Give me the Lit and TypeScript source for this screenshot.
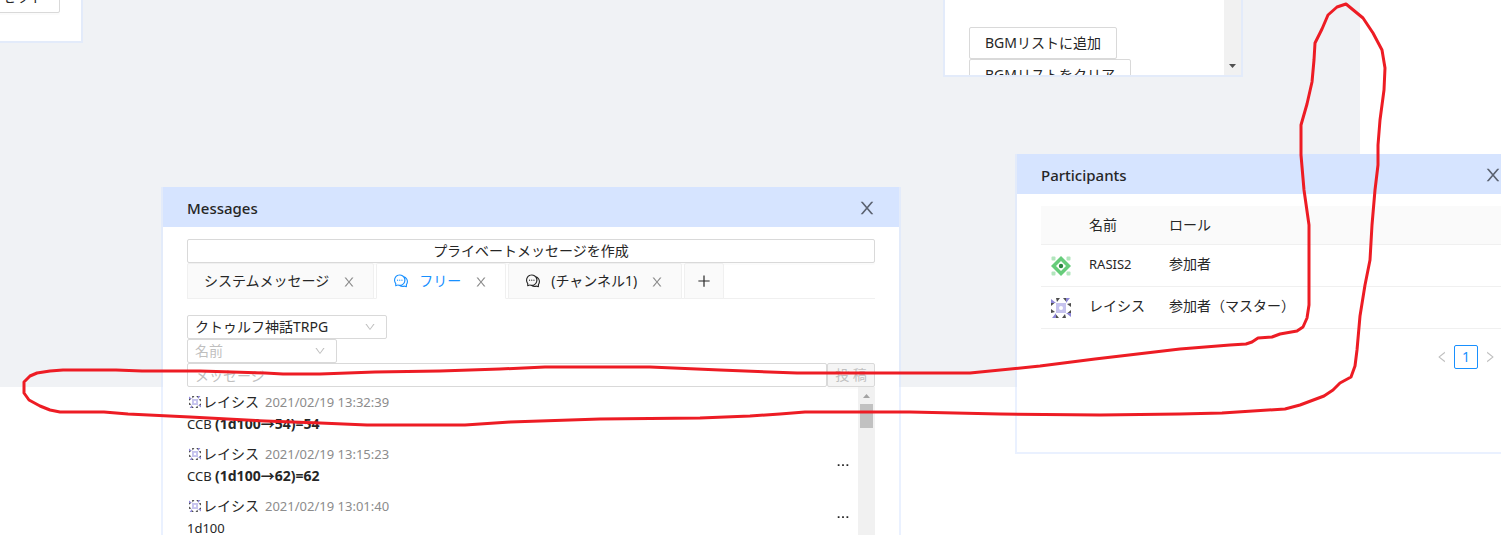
import { LitElement, html, css, svg } from "lit";
import { customElement, property, state } from "lit/decorators.js";
import { classMap } from "lit/directives/class-map.js";

const ICONS: Record<string, string> = {
  close:
    "M563.8 512l262.5-312.9c4.4-5.2.7-13.1-6.1-13.1h-79.8c-4.7 0-9.2 2.1-12.3 5.7L511.6 449.8 295.1 191.7c-3-3.6-7.5-5.7-12.3-5.7H203c-6.8 0-10.5 7.9-6.1 13.1L459.4 512 196.9 824.9A7.95 7.95 0 00203 838h79.8c4.7 0 9.2-2.1 12.3-5.7l216.5-258.1 216.5 258.1c3 3.6 7.5 5.7 12.3 5.7h79.8c6.8 0 10.5-7.9 6.1-13.1L563.8 512z",
  down: "M884 256h-75c-5.1 0-9.9 2.5-12.9 6.6L512 654.2 227.9 262.6c-3-4.1-7.8-6.6-12.9-6.6h-75c-6.5 0-10.3 7.4-6.5 12.7l352.6 486.1c12.8 17.6 39 17.6 51.7 0l352.6-486.1c3.9-5.3.1-12.7-6.4-12.7z",
  left: "M724 218.3V141c0-6.7-7.7-10.4-12.9-6.3L260.3 486.8a31.86 31.86 0 000 50.3l450.8 352.1c5.3 4.1 12.9.4 12.9-6.3v-77.3c0-4.9-2.3-9.6-6.1-12.6l-360-281 360-281.1c3.8-3 6.1-7.7 6.1-12.6z",
  right:
    "M765.7 486.8L314.9 134.7A7.97 7.97 0 00302 141v77.3c0 4.9 2.3 9.6 6.1 12.6l360 281.1-360 281.1c-3.9 3-6.1 7.7-6.1 12.6V883c0 6.7 7.7 10.4 12.9 6.3l450.8-352.1a31.96 31.96 0 000-50.4z",
  plus: "M474 152h76v720h-76zM152 474h720v76H152z",
  dots: "M176 456h112v112H176zM456 456h112v112H456zM736 456h112v112H736z",
  comment:
    "M573 421c-23.1 0-41 17.9-41 40s17.9 40 41 40c21.1 0 39-17.9 39-40s-17.9-40-39-40zm-280 0c-23.1 0-41 17.9-41 40s17.9 40 41 40c21.1 0 39-17.9 39-40s-17.9-40-39-40zM894 345a343.92 343.92 0 00-189-130v.1c-17.1-19-36.4-36.5-58-52.1-163.7-119-393.5-82.7-513 81-96.3 133-92.2 311.9 6 439l.8 132.6c0 3.2.5 6.4 1.5 9.4a31.95 31.95 0 0040.1 20.9L309 806c33.5 11.9 68.1 18.7 102.5 20.6l-.5.4c89.1 64.9 205.9 84.4 313 49l127.1 41.4c3.2 1 6.5 1.6 9.9 1.6 17.7 0 32-14.3 32-32V753c88.1-119.6 90.4-284.9 1-408zM323 735l-12-5-99 31-1-104-8-9c-84.6-103.2-90.2-251.9-11-361 96.4-132.2 281.2-161.4 413-66 132.2 96.1 161.5 280.6 66 412-80.1 109.9-223.5 150.5-348 102zm505-17l-8 10 1 104-98-33-12 5c-56 20.8-115.7 22.5-171 7l-.2-.1A367.31 367.31 0 00729 676c76.4-105.3 88.8-237.6 44.4-350.4l.6.4c23 16.5 44.1 37.1 62 62 72.6 99.6 68.5 235.2-8 330zM433 421c-23.1 0-41 17.9-41 40s17.9 40 41 40c21.1 0 39-17.9 39-40s-17.9-40-39-40z",
};

const icon = (name: string, size = 16) => html`<svg
  width=${size}
  height=${size}
  viewBox="0 0 1024 1024"
  fill="currentColor"
  aria-hidden="true"
>
  <path d=${ICONS[name]}></path>
</svg>`;

const quarterTurns = [0, 90, 180, 270];

const avatar = (kind: "green" | "violet", size: number) => html`<svg
  width=${size}
  height=${size}
  viewBox="0 0 20 20"
  aria-hidden="true"
>
  ${kind === "green"
    ? svg`${quarterTurns.map(
        (a) => svg`<g transform="rotate(${a} 10 10)">
          <rect x="0.5" y="0.5" width="4" height="4" rx="1" fill="#b2e6bd"></rect>
          <path d="M10 0L15 5H5z" fill="#66cc7a"></path>
        </g>`
      )}<path d="M5 5h10v10H5z" fill="#66cc7a"></path>
        <path d="M10 5L15 10L10 15L5 10z" fill="#fff"></path>
        <circle cx="10" cy="10" r="2.2" fill="#2a8540"></circle>`
    : svg`${quarterTurns.map(
        (a) => svg`<g transform="rotate(${a} 10 10)">
          <path d="M0 5V1L5 5z" fill="#8d86d6"></path>
          <path d="M5 0h4L6 4z" fill="#4d4d4d"></path>
          <path d="M12 0h3v3.500z" fill="#4d4d4d"></path>
        </g>`
      )}<path d="M5 5h10v10H5z" fill="#c6c3ee"></path><circle cx="10" cy="10" r="2" fill="#fff"></circle>`}
</svg>`;

const base = css`
  * {
    box-sizing: border-box;
  }
  button,
  input,
  select {
    margin: 0;
    padding: 0;
    border: 0;
    background: none;
    color: inherit;
    font: inherit;
    border-radius: 0;
  }
  svg {
    display: block;
    flex: none;
  }
  .btn {
    height: 32px;
    padding: 0 15px;
    border: 1px solid #d9d9d9;
    border-radius: 2px;
    background: #fff;
    box-shadow: 0 2px 0 rgba(0, 0, 0, 0.016);
    white-space: nowrap;
    line-height: 22px;
  }
  .btn.small {
    height: 24px;
    padding: 0 7px;
  }
`;

@customElement("float-window")
class FloatWindow extends LitElement {
  @property() heading = "";

  static styles = [
    base,
    css`
      :host {
        display: flex;
        flex-direction: column;
        box-sizing: border-box;
        overflow: hidden;
        border: 2px solid rgba(214, 228, 255, 0.5);
        border-top: 0;
        background: #fff;
        background-clip: padding-box;
      }
      .head {
        display: flex;
        flex: none;
        align-items: center;
        justify-content: space-between;
        height: 40px;
        padding: 2px 22px 0 24px;
        background: #d6e4ff;
      }
      h2 {
        margin: 0;
        font-size: 15px;
        line-height: 22px;
        font-weight: 500;
      }
      .close {
        color: #5b6270;
      }
      .body {
        flex: 1;
        min-height: 0;
      }
    `,
  ];

  render() {
    return html`
      ${this.heading
        ? html`<header class="head">
            <h2>${this.heading}</h2>
            <button class="close" aria-label="閉じる">${icon("close", 20)}</button>
          </header>`
        : null}
      <div class="body"><slot></slot></div>
    `;
  }
}

@customElement("message-panel")
class MessagePanel extends LitElement {
  @state() private active = 1;

  private tabs = [
    { label: "システムメッセージ", channel: false },
    { label: "フリー", channel: true },
    { label: "(チャンネル1)", channel: true },
  ];

  private messages = [
    { time: "2021/02/19 13:32:39", text: "CCB", roll: "(1d100→54)=54", menu: false },
    { time: "2021/02/19 13:15:23", text: "CCB", roll: "(1d100→62)=62", menu: true },
    { time: "2021/02/19 13:01:40", text: "1d100", roll: "", menu: true },
  ];

  static styles = [
    base,
    css`
      :host {
        display: flex;
        flex-direction: column;
        height: 100%;
        padding: 12px 24px 0;
      }
      .tabs {
        display: flex;
        gap: 2px;
        height: 36px;
        margin-bottom: 16px;
        border-bottom: 1px solid #f0f0f0;
      }
      .tab {
        display: flex;
        align-items: center;
        height: 36px;
        padding: 0 17px 0 16px;
        gap: 13px;
        border: 1px solid #f0f0f0;
        border-radius: 2px 2px 0 0;
        background: #fafafa;
      }
      .tab.active {
        border-bottom-color: #fff;
        background: #fff;
        color: #1890ff;
      }
      .label {
        display: flex;
        align-items: center;
        gap: 10px;
        white-space: nowrap;
      }
      .x {
        padding-top: 2px;
        color: #8c8c8c;
      }
      .add {
        width: 40px;
        padding: 0 11px;
      }
      .select {
        display: grid;
        align-items: center;
        width: 200px;
      }
      .select.short {
        width: 150px;
        color: #bfbfbf;
      }
      .select > * {
        grid-area: 1 / 1;
      }
      .select svg {
        justify-self: end;
        margin-right: 11px;
        color: #bfbfbf;
        pointer-events: none;
      }
      select {
        appearance: none;
        height: 24px;
        padding: 0 7px;
        border: 1px solid #d9d9d9;
        border-radius: 2px;
        background: #fff;
      }
      .compose {
        display: flex;
      }
      .compose input {
        flex: 1;
        min-width: 0;
        height: 24px;
        padding: 0 7px;
        border: 1px solid #d9d9d9;
        border-radius: 2px;
      }
      input::placeholder {
        color: #bfbfbf;
      }
      .btn.send {
        width: 48px;
        background: #f5f5f5;
        color: #bfbfbf;
      }
      .log {
        display: flex;
        flex: 1;
        min-height: 0;
      }
      ul {
        flex: 1;
        margin: 0;
        padding: 0;
        list-style: none;
      }
      li {
        display: flex;
        align-items: center;
        justify-content: space-between;
        height: 52px;
        padding: 4px 7px 4px 0;
        line-height: 22px;
      }
      .who {
        display: flex;
        align-items: center;
        gap: 2px;
        padding-left: 2px;
      }
      time {
        margin-left: 4px;
        color: #8c8c8c;
      }
      .latin {
        font-size: 13px;
      }
      b {
        font-size: 14px;
      }
      .track {
        display: flex;
        flex-direction: column;
        align-items: center;
        gap: 6px;
        width: 17px;
        padding-top: 7px;
        background: #f1f1f1;
      }
      .arrow {
        color: #a3a3a3;
      }
      .thumb {
        width: 13px;
        height: 24px;
        background: #c1c1c1;
      }
    `,
  ];

  render() {
    return html`
      <button class="btn small">プライベートメッセージを作成</button>
      <div class="tabs">
        ${this.tabs.map(
          (t, i) => html`<div class=${classMap({ tab: true, active: i === this.active })}>
            <button class="label" @click=${() => (this.active = i)}>
              ${t.channel ? icon("comment") : null}<span>${t.label}</span>
            </button>
            <button class="x" aria-label="閉じる">${icon("close", 14)}</button>
          </div>`
        )}
        <button class="tab add" aria-label="追加">${icon("plus")}</button>
      </div>
      <div class="select">
        <select aria-label="ゲームシステム">
          <option>クトゥルフ神話TRPG</option>
        </select>
        ${icon("down", 12)}
      </div>
      <div class="select short">
        <select aria-label="名前">
          <option>名前</option>
        </select>
        ${icon("down", 12)}
      </div>
      <div class="compose">
        <input aria-label="メッセージ" placeholder="メッセージ" />
        <button class="btn small send" disabled>投 稿</button>
      </div>
      <div class="log">
        <ul>
          ${this.messages.map(
            (m) => html`<li>
              <div>
                <div class="who">
                  ${avatar("violet", 12)}<span>レイシス</span><time class="latin">${m.time}</time>
                </div>
                <div class="latin">${m.text} <b>${m.roll}</b></div>
              </div>
              ${m.menu ? html`<button aria-label="メニュー">${icon("dots")}</button>` : null}
            </li>`
          )}
        </ul>
        <div class="track">
          <svg class="arrow" width="7" height="4" viewBox="0 0 7 4" fill="currentColor">
            <path d="M3.500 0L7 4H0z"></path>
          </svg>
          <div class="thumb"></div>
        </div>
      </div>
    `;
  }
}

@customElement("participant-panel")
class ParticipantPanel extends LitElement {
  static styles = [
    base,
    css`
      :host {
        display: block;
        padding: 12px 23px 12px 24px;
      }
      table {
        width: 100%;
        border-collapse: separate;
        border-spacing: 0;
        table-layout: fixed;
      }
      th,
      td {
        padding: 8px;
        border-bottom: 1px solid #f0f0f0;
        text-align: left;
        font-weight: 400;
        line-height: 22px;
        white-space: nowrap;
      }
      td {
        height: 42px;
        vertical-align: top;
      }
      th {
        background: #fafafa;
      }
      th.pic,
      td.pic {
        width: 40px;
        padding: 0 10px;
        vertical-align: middle;
      }
      .name {
        width: 80px;
      }
      .latin {
        font-size: 13px;
      }
      nav {
        display: flex;
        justify-content: flex-end;
        margin-top: 16px;
      }
      nav button {
        display: grid;
        place-items: center;
        width: 24px;
        height: 24px;
        color: #bfbfbf;
      }
      nav .page {
        border: 1px solid #1890ff;
        border-radius: 2px;
        color: #1890ff;
      }
    `,
  ];

  render() {
    return html`
      <table>
        <thead>
          <tr>
            <th class="pic"></th>
            <th class="name">名前</th>
            <th>ロール</th>
          </tr>
        </thead>
        <tbody>
          <tr>
            <td class="pic">${avatar("green", 20)}</td>
            <td class="latin">RASIS2</td>
            <td>参加者</td>
          </tr>
          <tr>
            <td class="pic">${avatar("violet", 20)}</td>
            <td>レイシス</td>
            <td>参加者（マスター）</td>
          </tr>
        </tbody>
      </table>
      <nav aria-label="ページ">
        <button disabled aria-label="前へ">${icon("left", 14)}</button>
        <button class="page">1</button>
        <button disabled aria-label="次へ">${icon("right", 14)}</button>
      </nav>
    `;
  }
}

const LOOP: number[][] = [
  [1346, 4], [1337, 7], [1328, 15], [1322, 29], [1315, 43], [1314, 60], [1312, 82], [1307, 104],
  [1301, 125], [1301, 155], [1304, 190], [1309, 225], [1309, 305], [1307, 318], [1303, 327],
  [1297, 331], [1280, 334], [1272, 337], [1258, 338], [1252, 342], [1246, 344], [1230, 345],
  [1180, 349], [1095, 359], [1040, 366], [970, 373], [910, 373], [797, 373], [720, 370], [650, 367],
  [545, 367], [500, 369], [440, 371], [375, 372], [320, 374], [283, 374], [265, 373], [200, 371],
  [142, 371], [116, 370], [63, 370], [50, 371], [37, 373], [30, 376], [24, 382], [24, 393], [29, 400],
  [40, 406], [50, 410], [60, 412], [104, 412], [128, 414], [190, 417], [265, 421], [320, 423],
  [367, 425], [465, 425], [510, 422], [600, 419], [700, 418], [750, 416], [780, 414], [805, 412],
  [910, 412], [1000, 414], [1100, 415], [1180, 414], [1222, 413], [1285, 409], [1300, 405],
  [1324, 396], [1333, 390], [1340, 383], [1351, 377], [1355, 366], [1357, 350], [1360, 316],
  [1365, 285], [1370, 260], [1372, 225], [1375, 190], [1378, 165], [1378, 145], [1380, 120],
  [1384, 90], [1385, 68], [1382, 50], [1373, 33], [1363, 18],
];

@customElement("app-root")
class AppRoot extends LitElement {
  static styles = [
    base,
    css`
      :host {
        display: block;
        position: relative;
        height: 100vh;
        overflow: hidden;
        background: #fff;
        color: #262626;
        font-family: "Noto Sans", "Noto Sans CJK JP", sans-serif;
        font-size: 14px;
        line-height: 22px;
      }
      .board {
        width: calc(100% - 141px);
        height: calc(100vh - 148px);
        background: #f0f2f5;
      }
      float-window {
        position: absolute;
      }
      .reset {
        left: -54px;
        top: -19px;
        width: 137px;
        height: 62px;
      }
      .reset .btn {
        margin-left: 24px;
      }
      .bgm {
        left: 943px;
        top: 0;
        width: 300px;
        height: 77px;
      }
      .bgm-body {
        display: flex;
        justify-content: space-between;
        height: 100%;
      }
      .bgm-list {
        display: flex;
        flex-direction: column;
        align-items: flex-start;
        padding: 27px 0 0 24px;
      }
      .bgm-list .btn {
        flex: none;
      }
      .track {
        display: flex;
        align-items: flex-end;
        justify-content: center;
        width: 17px;
        padding-bottom: 7px;
        background: #f1f1f1;
        color: #505050;
      }
      .messages {
        left: 161px;
        top: 187px;
        width: 740px;
        height: 400px;
      }
      .participants {
        left: 1015px;
        top: 154px;
        width: 512px;
        height: 300px;
      }
      .ink {
        position: absolute;
        left: 0;
        top: 0;
        pointer-events: none;
      }
    `,
  ];

  render() {
    return html`
      <div class="board"></div>
      <float-window class="reset"><button class="btn">リセット</button></float-window>
      <float-window class="bgm">
        <div class="bgm-body">
          <div class="bgm-list">
            <button class="btn">BGMリストに追加</button>
            <button class="btn">BGMリストをクリア</button>
          </div>
          <div class="track">
            <svg width="7" height="4" viewBox="0 0 7 4" fill="currentColor">
              <path d="M0 0H7L3.500 4z"></path>
            </svg>
          </div>
        </div>
      </float-window>
      <float-window class="participants" heading="Participants">
        <participant-panel></participant-panel>
      </float-window>
      <float-window class="messages" heading="Messages">
        <message-panel></message-panel>
      </float-window>
      <svg class="ink" width="1501" height="535" viewBox="0 0 1501 535" aria-hidden="true">
        <polygon
          points=${LOOP.map((p) => p.join(",")).join(" ")}
          fill="none"
          stroke="#ed1c24"
          stroke-width="3"
          stroke-linejoin="round"
        ></polygon>
      </svg>
    `;
  }
}
